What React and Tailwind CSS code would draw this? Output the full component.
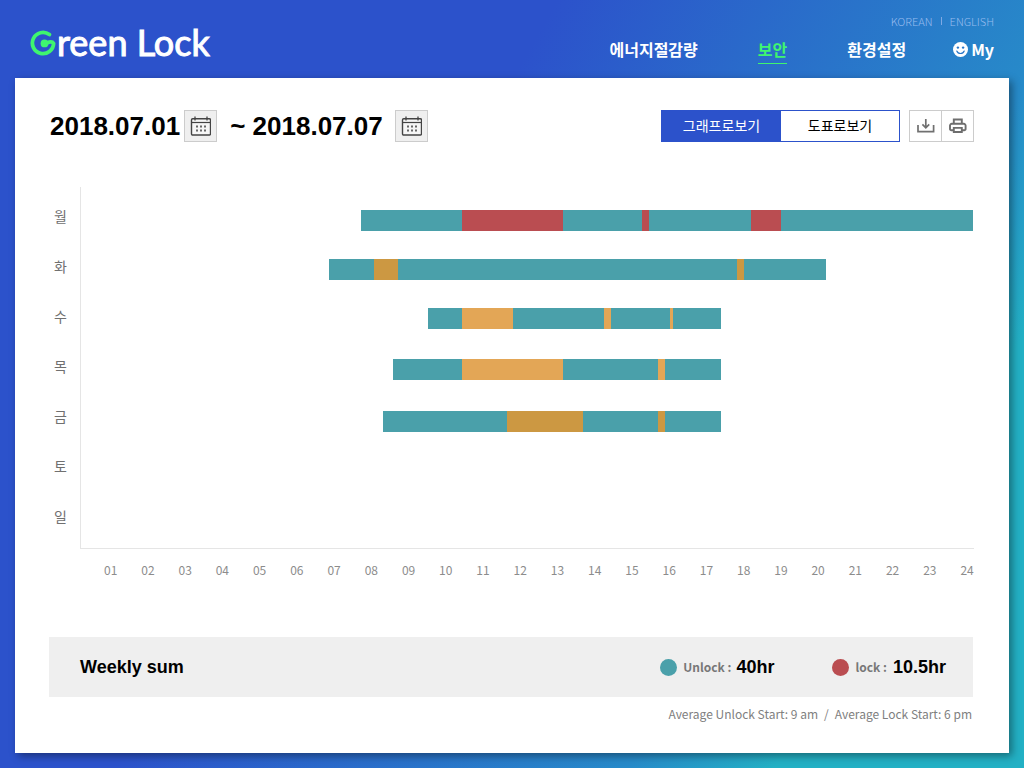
import React from "react";

const KR = "font-['Noto_Sans_CJK_KR','Noto_Sans',sans-serif]";
const ARIAL = "font-['Liberation_Sans',sans-serif]";

const UNLOCK = "#4aa0aa";
const LOCK = "#ba4d51";
const OCHRE = "#cc9842";
const AMBER = "#e3a656";

const DAYS = ["월", "화", "수", "목", "금", "토", "일"];
const HOURS = Array.from({ length: 24 }, (_, i) => String(i + 1).padStart(2, "0"));

// Each bar: vertical position, open range, and the coloured intervals on top of it.
const BARS = [
  { y: 23, from: 280, to: 892, color: LOCK, marks: [[381, 482], [561, 568], [670, 700]] },
  { y: 72, from: 248, to: 745, color: OCHRE, marks: [[293, 317], [656, 663]] },
  { y: 121, from: 347, to: 640, color: AMBER, marks: [[381, 432], [523, 530], [589, 592]] },
  { y: 172, from: 312, to: 640, color: AMBER, marks: [[381, 482], [577, 584]] },
  { y: 224, from: 302, to: 640, color: OCHRE, marks: [[426, 502], [577, 584]] },
];

function Logo() {
  return (
    <a href="#home" aria-label="Green Lock" className="flex items-center">
      <svg width="27" height="28" viewBox="0 0 27 28" fill="none" aria-hidden="true">
        <path
          d="M19.4 6.6A10.6 10.6 0 1 0 23.6 15.4C22.6 13.8 20 13.6 17 15"
          stroke="#3ff56f"
          strokeWidth="3.8"
          strokeLinecap="round"
          strokeLinejoin="round"
        />
        <circle cx="14.5" cy="15.4" r="3.9" fill="#3ff56f" />
      </svg>
      <span className="font-['Lato',sans-serif] text-4xl leading-10 text-white [-webkit-text-stroke:1px_white]">
        reen Lock
      </span>
    </a>
  );
}

function SmileIcon() {
  return (
    <svg width="15" height="15" viewBox="0 0 15 15" aria-hidden="true">
      <circle cx="7.5" cy="7.5" r="7.5" fill="#fff" />
      <circle cx="4.9" cy="5.6" r="1.2" fill="#2877c9" />
      <circle cx="10.1" cy="5.6" r="1.2" fill="#2877c9" />
      <path d="M3.8 9a4 4 0 0 0 7.4 0" fill="none" stroke="#2877c9" strokeWidth="1.2" strokeLinecap="round" />
    </svg>
  );
}

function CalendarButton({ label }) {
  return (
    <button
      type="button"
      aria-label={label}
      className="flex h-8 w-[33px] items-center justify-center border border-[#cccccc] bg-[#efefef]"
    >
      <svg width="21" height="20" viewBox="0 0 21 20" fill="none" stroke="#444" aria-hidden="true">
        <rect x="1.5" y="2.7" width="19" height="16.3" rx="1.2" strokeWidth="1.4" fill="#f6f6f6" />
        <path d="M1.5 6.5H20.5" strokeWidth="1.2" />
        <path d="M5 0.5V4.5M17 0.5V4.5" strokeWidth="1.3" />
        <path d="M6.2 10.5h1.6M10.2 10.5h1.6M14.2 10.5h1.6M6.2 14.5h1.6M10.2 14.5h1.6M14.2 14.5h1.6" strokeWidth="1.8" />
      </svg>
    </button>
  );
}

function DownloadIcon() {
  return (
    <svg width="18" height="16" viewBox="0 0 18 16" fill="none" stroke="#707070" strokeWidth="1.7" aria-hidden="true">
      <path d="M1 7V13.6H16.6V7" />
      <path d="M8.8 1V9.6M5.4 6.4L8.8 9.8L12.2 6.4" />
    </svg>
  );
}

function PrintIcon() {
  return (
    <svg width="18" height="16" viewBox="0 0 18 16" fill="none" stroke="#6e6e6e" strokeWidth="1.9" aria-hidden="true">
      <path d="M4.8 6V1.5H12.8V6" />
      <path d="M4.8 12.3H2.4A1.4 1.4 0 0 1 1 10.9V7.6A1.8 1.8 0 0 1 2.8 5.8H14.8A1.8 1.8 0 0 1 16.6 7.6V10.9A1.4 1.4 0 0 1 15.2 12.3H12.8" />
      <path d="M4.8 9.9H12.8V14H4.8Z" />
    </svg>
  );
}

function Header() {
  return (
    <header className="flex h-[78px] items-start justify-between px-[30px]">
      <div className="pt-[22px]">
        <Logo />
      </div>
      <div className="flex flex-col items-end pt-[13px]">
        <div className="flex items-center text-[11px] leading-4 font-light text-[#98bcee]">
          <a href="#korean">KOREAN</a>
          <span className="mx-2 h-2 w-px bg-[#7fa9e4]" />
          <a href="#english">ENGLISH</a>
        </div>
        <nav className="mt-2 flex items-start text-base leading-6 font-bold text-white">
          <a href="#energy" className="mr-[60px]">에너지절감량</a>
          <a href="#security" aria-current="page" className="mr-[60px] border-b border-[#3ff56f] pb-[2px] text-[#3ff56f]">
            보안
          </a>
          <a href="#settings" className="mr-[47px]">환경설정</a>
          <a href="#my" className="flex items-center gap-[3px]">
            <SmileIcon />
            My
          </a>
        </nav>
      </div>
    </header>
  );
}

function Toolbar() {
  return (
    <div className="flex flex-wrap items-center justify-between gap-y-3">
      <div className={`flex items-center text-[26px] leading-8 font-bold text-black ${ARIAL}`}>
        <time dateTime="2018-07-01" className="mr-1 pl-px">2018.07.01</time>
        <CalendarButton label="Choose start date" />
        <span className="mr-3 ml-[13px]">
          ~ <time dateTime="2018-07-07">2018.07.07</time>
        </span>
        <CalendarButton label="Choose end date" />
      </div>
      <div className="flex items-center gap-[9px]">
        <div className="flex border border-[#2c52cb] text-sm leading-7">
          <button type="button" aria-pressed="true" className="w-[119px] bg-[#2c52cb] pb-[2px] text-white">그래프로보기</button>
          <button type="button" aria-pressed="false" className="w-[118px] bg-white pb-[2px] text-black">도표로보기</button>
        </div>
        <div className="flex h-8 border border-[#cccccc]">
          <button type="button" aria-label="Download" className="flex w-8 items-center justify-center border-r border-[#cccccc]">
            <DownloadIcon />
          </button>
          <button type="button" aria-label="Print" className="flex w-[31px] items-center justify-center">
            <PrintIcon />
          </button>
        </div>
      </div>
    </div>
  );
}

function Chart() {
  return (
    <section aria-label="Unlock and lock times" className="mt-[45px]">
      <div className="flex">
        <ul className="w-[31px] shrink-0 pt-1 pl-[5px] text-sm text-[#707070]">
          {DAYS.map((day) => (
            <li key={day} className="flex h-[50px] items-center">{day}</li>
          ))}
        </ul>
        <div className="min-w-0 flex-1 border-b border-l border-[#e5e5e5]">
          <svg
            className="block h-[361px] w-full"
            viewBox="0 0 893 361"
            preserveAspectRatio="none"
            shapeRendering="crispEdges"
            aria-hidden="true"
          >
            {BARS.map((bar) => (
              <g key={bar.y}>
                <rect x={bar.from} y={bar.y} width={bar.to - bar.from} height="21" fill={UNLOCK} />
                {bar.marks.map(([a, b]) => (
                  <rect key={a} x={a} y={bar.y} width={b - a} height="21" fill={bar.color} />
                ))}
              </g>
            ))}
          </svg>
        </div>
      </div>
      <ol className="mt-[11px] flex justify-between pl-[55px] text-xs leading-5 text-[#8c8c8c]">
        {HOURS.map((hour) => (
          <li key={hour}>{hour}</li>
        ))}
      </ol>
    </section>
  );
}

function Summary() {
  return (
    <section className="mt-[57px] mr-px">
      <div className={`flex h-[60px] items-center justify-between bg-[#efefef] pr-[27px] pl-[31px] text-lg font-bold text-black ${ARIAL}`}>
        <h2>Weekly sum</h2>
        <dl className="flex items-center gap-[58px]">
          <div className="flex items-center">
            <span className="mr-[6px] size-[17px] rounded-full bg-[#4aa0aa]" />
            <dt className={`mr-[5px] text-xs text-[#777777] ${KR}`}>Unlock :</dt>
            <dd>40hr</dd>
          </div>
          <div className="flex items-center">
            <span className="mr-[6px] size-[17px] rounded-full bg-[#ba4d51]" />
            <dt className={`mr-[6px] text-xs text-[#777777] ${KR}`}>lock :</dt>
            <dd>10.5hr</dd>
          </div>
        </dl>
      </div>
      <p className="mt-[7px] flex justify-end gap-[6px] pr-px text-xs leading-5 text-[#808080]">
        <span>Average Unlock Start: 9 am</span>
        <span>/</span>
        <span>Average Lock Start: 6 pm</span>
      </p>
    </section>
  );
}

export default function App() {
  return (
    <div className={`min-h-screen bg-[linear-gradient(120deg,#2c52cb_38%,#278ac9_73%,#23b0c4_83%)] pb-[15px] ${KR}`}>
      <Header />
      <main className="mx-[15px] bg-white pt-8 pr-[35px] pb-[29px] pl-[34px] shadow-[3px_3px_8px_rgba(0,0,0,0.4)]">
        <Toolbar />
        <Chart />
        <Summary />
      </main>
    </div>
  );
}
